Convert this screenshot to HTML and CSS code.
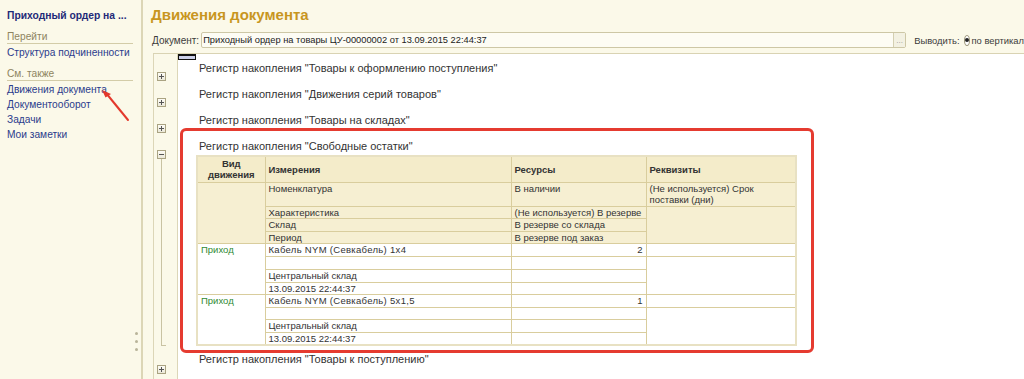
FILE: index.html
```html
<!DOCTYPE html>
<html lang="ru">
<head>
<meta charset="utf-8">
<title>Движения документа</title>
<link rel="stylesheet" href="styles.css">
</head>
<body>
<div class="app">
  <aside class="side">
    <div class="side-title">Приходный ордер на ...</div>
    <div class="side-sec">Перейти</div>
    <a class="side-link">Структура подчиненности</a>
    <div class="side-sec side-sec2">См. также</div>
    <a class="side-link">Движения документа</a>
    <a class="side-link">Документооборот</a>
    <a class="side-link">Задачи</a>
    <a class="side-link">Мои заметки</a>
    <div class="grip"><span></span><span></span><span></span></div>
  </aside>
  <main class="main">
    <h1 class="title">Движения документа</h1>
    <div class="docrow">
      <span class="lbl">Документ:</span>
      <div class="field"><span class="field-text">Приходный ордер на товары ЦУ-00000002 от 13.09.2015 22:44:37</span><span class="field-btn">...</span></div>
      <span class="lbl out">Выводить:</span>
      <span class="radio"></span>
      <span class="lbl opt">по вертикали</span>
    </div>
    <div class="sheet">
      <div class="gutter">
        <span class="tb plus"></span>
        <span class="tb plus"></span>
        <span class="tb plus"></span>
        <span class="tb minus"></span>
        <span class="tree-line"></span>
        <span class="tb plus"></span>
      </div>
      <div class="body">
        <div class="cursor"></div>
        <div class="reg first">Регистр накопления "Товары к оформлению поступления"</div>
        <div class="reg">Регистр накопления "Движения серий товаров"</div>
        <div class="reg">Регистр накопления "Товары на складах"</div>
        <div class="block">
          <div class="reg tight">Регистр накопления "Свободные остатки"</div>
          <table class="grid">
            <colgroup><col class="c1"><col class="c2"><col class="c3"><col class="c4"></colgroup>
            <tr class="h hr">
              <th class="center">Вид<br>движения</th>
              <th>Измерения</th>
              <th>Ресурсы</th>
              <th>Реквизиты</th>
            </tr>
            <tr class="h r24">
              <td rowspan="4"></td>
              <td>Номенклатура</td>
              <td>В наличии</td>
              <td class="two">(Не используется) Срок<br>поставки (дни)</td>
            </tr>
            <tr class="h r12">
              <td>Характеристика</td>
              <td>(Не используется) В резерве</td>
              <td rowspan="3"></td>
            </tr>
            <tr class="h r13">
              <td>Склад</td>
              <td>В резерве со склада</td>
            </tr>
            <tr class="h r12">
              <td>Период</td>
              <td>В резерве под заказ</td>
            </tr>
            <tr class="r13">
              <td rowspan="4" class="move">Приход</td>
              <td class="wide">Кабель NYM (Севкабель) 1x4</td>
              <td class="num">2</td>
              <td></td>
            </tr>
            <tr class="r13"><td></td><td></td><td rowspan="3"></td></tr>
            <tr class="r13"><td>Центральный склад</td><td></td></tr>
            <tr class="r12"><td>13.09.2015 22:44:37</td><td></td></tr>
            <tr class="r13">
              <td rowspan="4" class="move">Приход</td>
              <td class="wide">Кабель NYM (Севкабель) 5x1,5</td>
              <td class="num">1</td>
              <td></td>
            </tr>
            <tr class="r12"><td></td><td></td><td rowspan="3"></td></tr>
            <tr class="r13"><td>Центральный склад</td><td></td></tr>
            <tr class="r12"><td>13.09.2015 22:44:37</td><td></td></tr>
          </table>
        </div>
        <div class="reg">Регистр накопления "Товары к поступлению"</div>
      </div>
    </div>
  </main>
  <svg class="arrow" width="40" height="40" viewBox="0 0 40 40">
    <line x1="30" y1="33" x2="8" y2="6" stroke="#e3392c" stroke-width="2" stroke-linecap="round"/>
    <path d="M4 3 L13 7 L7.5 10.5 Z" fill="#e3392c"/>
  </svg>
</div>
</body>
</html>
```
FILE: styles.css
```css
* { box-sizing: border-box; }
html, body { margin: 0; padding: 0; }
body {
  background: #fbf9e9;
  font-family: "Liberation Sans", Arial, sans-serif;
  color: #333;
  width: 1024px;
  height: 379px;
  overflow: hidden;
}
.app {
  position: relative;
  display: flex;
  height: 379px;
}
.side {
  width: 143px;
  flex: none;
  border-right: 2px solid #dcd6b6;
  padding: 8px 0 0 7px;
  display: flex;
  flex-direction: column;
  font-size: 10.2px;
  line-height: 15px;
}
.side-title {
  font-weight: bold;
  color: #1f2a78;
  font-size: 10.3px;
  margin-bottom: 7px;
}
.side-sec {
  color: #8e8460;
  line-height: 13px;
  border-bottom: 1px solid #d3cca8;
  margin-right: 8px;
  margin-bottom: 1px;
}
.side-sec2 { margin-top: 7px; }
.side-link {
  color: #2b3c8c;
  display: block;
}
.grip {
  margin-top: auto;
  margin-bottom: 28px;
  align-self: flex-end;
  margin-right: 3px;
  display: flex;
  flex-direction: column;
  gap: 5px;
}
.grip span {
  width: 3px;
  height: 3px;
  border-radius: 50%;
  background: #b9b49a;
}
.main {
  flex: 1;
  min-width: 0;
  overflow: hidden;
  display: flex;
  flex-direction: column;
}
.title {
  margin: 6px 0 0 8px;
  font-size: 15px;
  line-height: 18px;
  font-weight: bold;
  color: #c8961f;
}
.docrow {
  margin: 8px 0 0 9px;
  height: 16px;
  display: flex;
  align-items: center;
  white-space: nowrap;
  font-size: 10px;
}
.lbl { color: #3b3b3b; }
.field {
  margin-left: 2px;
  width: 705px;
  flex: none;
  height: 16px;
  border: 1px solid #cdc7a6;
  border-radius: 2px;
  background: #fdfcf4;
  display: flex;
  align-items: center;
  padding-left: 1px;
  font-size: 9.3px;
}
.field-text { flex: 1; color: #222; }
.field-btn {
  width: 12px;
  height: 14px;
  border-left: 1px solid #d4cfb1;
  color: #999;
  font-size: 8px;
  line-height: 16px;
  text-align: center;
  background: #f3f1e2;
}
.out { margin-left: 8px; font-size: 9.4px; }
.opt { font-size: 9.4px; }
.radio {
  width: 11px;
  height: 11px;
  border: 1px solid #9b9579;
  border-radius: 50%;
  background: #fff;
  margin: 0 2px 0 4px;
  display: flex;
  align-items: center;
  justify-content: center;
}
.radio::after {
  content: "";
  width: 4px;
  height: 4px;
  border-radius: 50%;
  background: #222;
}
.sheet {
  margin: 5px 0 0 10px;
  flex: 1;
  display: flex;
  border-top: 1px solid #d9d3b3;
}
.gutter {
  width: 25px;
  flex: none;
  border-left: 1px solid #dcd6b7;
  border-right: 1px solid #dcd6b7;
  background: #fbf9e9;
  display: flex;
  flex-direction: column;
  align-items: flex-start;
  padding: 18px 0 0 3px;
}
.tb {
  width: 9px;
  height: 9px;
  border: 1px solid #aaa382;
  background: linear-gradient(#fdfcf6, #ebe8d8);
  position: relative;
  margin-bottom: 17px;
}
.tb::before {
  content: "";
  position: absolute;
  left: 1px;
  top: 3px;
  width: 5px;
  height: 1px;
  background: #555;
}
.plus::after {
  content: "";
  position: absolute;
  left: 3px;
  top: 1px;
  width: 1px;
  height: 5px;
  background: #555;
}
.minus { margin-bottom: 0; }
.tree-line {
  margin-left: 4px;
  width: 5px;
  height: 187px;
  border-left: 1px solid #c9c3a3;
  border-bottom: 1px solid #c9c3a3;
  margin-bottom: 19px;
}
.body {
  flex: 1;
  background: #fff;
  display: flex;
  flex-direction: column;
}
.cursor {
  width: 18px;
  height: 6px;
  border: 1px solid #111;
  border-top-width: 2px;
  background: #ccd0ea;
}
.reg {
  padding: 6px 0 6px 21px;
  font-size: 11px;
  line-height: 14px;
  color: #333;
  white-space: nowrap;
}
.reg.first { padding-top: 1px; }
.reg.tight { padding-bottom: 2px; }
.block { position: relative; }
.block::before {
  content: "";
  position: absolute;
  left: 2px;
  top: -5px;
  bottom: -7px;
  width: 628px;
  border: 3px solid #e53b30;
  border-radius: 6px;
  pointer-events: none;
}
.grid {
  margin-left: 18px;
  width: 599px;
  border-collapse: collapse;
  table-layout: fixed;
  font-size: 9.5px;
  line-height: 11px;
  color: #333;
  border: 2px solid #e8e1c3;
}
.c1 { width: 68px; }
.c2 { width: 246px; }
.c3 { width: 135px; }
.c4 { width: 150px; }
.grid th, .grid td {
  border: 1px solid #d9cd9d;
  padding: 0 3px;
  vertical-align: top;
  text-align: left;
  overflow: hidden;
  white-space: nowrap;
}
.grid th {
  font-weight: bold;
  vertical-align: middle;
  background: #f4ecca;
  line-height: 11px;
}
.grid th.center { text-align: center; }
.h td { background: #f6efd2; }
.grid td.two { line-height: 11.5px; }
.grid td.wide { letter-spacing: 0.3px; }
.hr { height: 26px; }
.r24 { height: 24px; }
.r24 td { padding-top: 0; }
.r12 { height: 12px; }
.r13 { height: 13px; }
.grid td.num { text-align: right; }
.grid td.move { color: #2f8a33; }
.arrow {
  position: absolute;
  left: 98px;
  top: 87px;
}
```
